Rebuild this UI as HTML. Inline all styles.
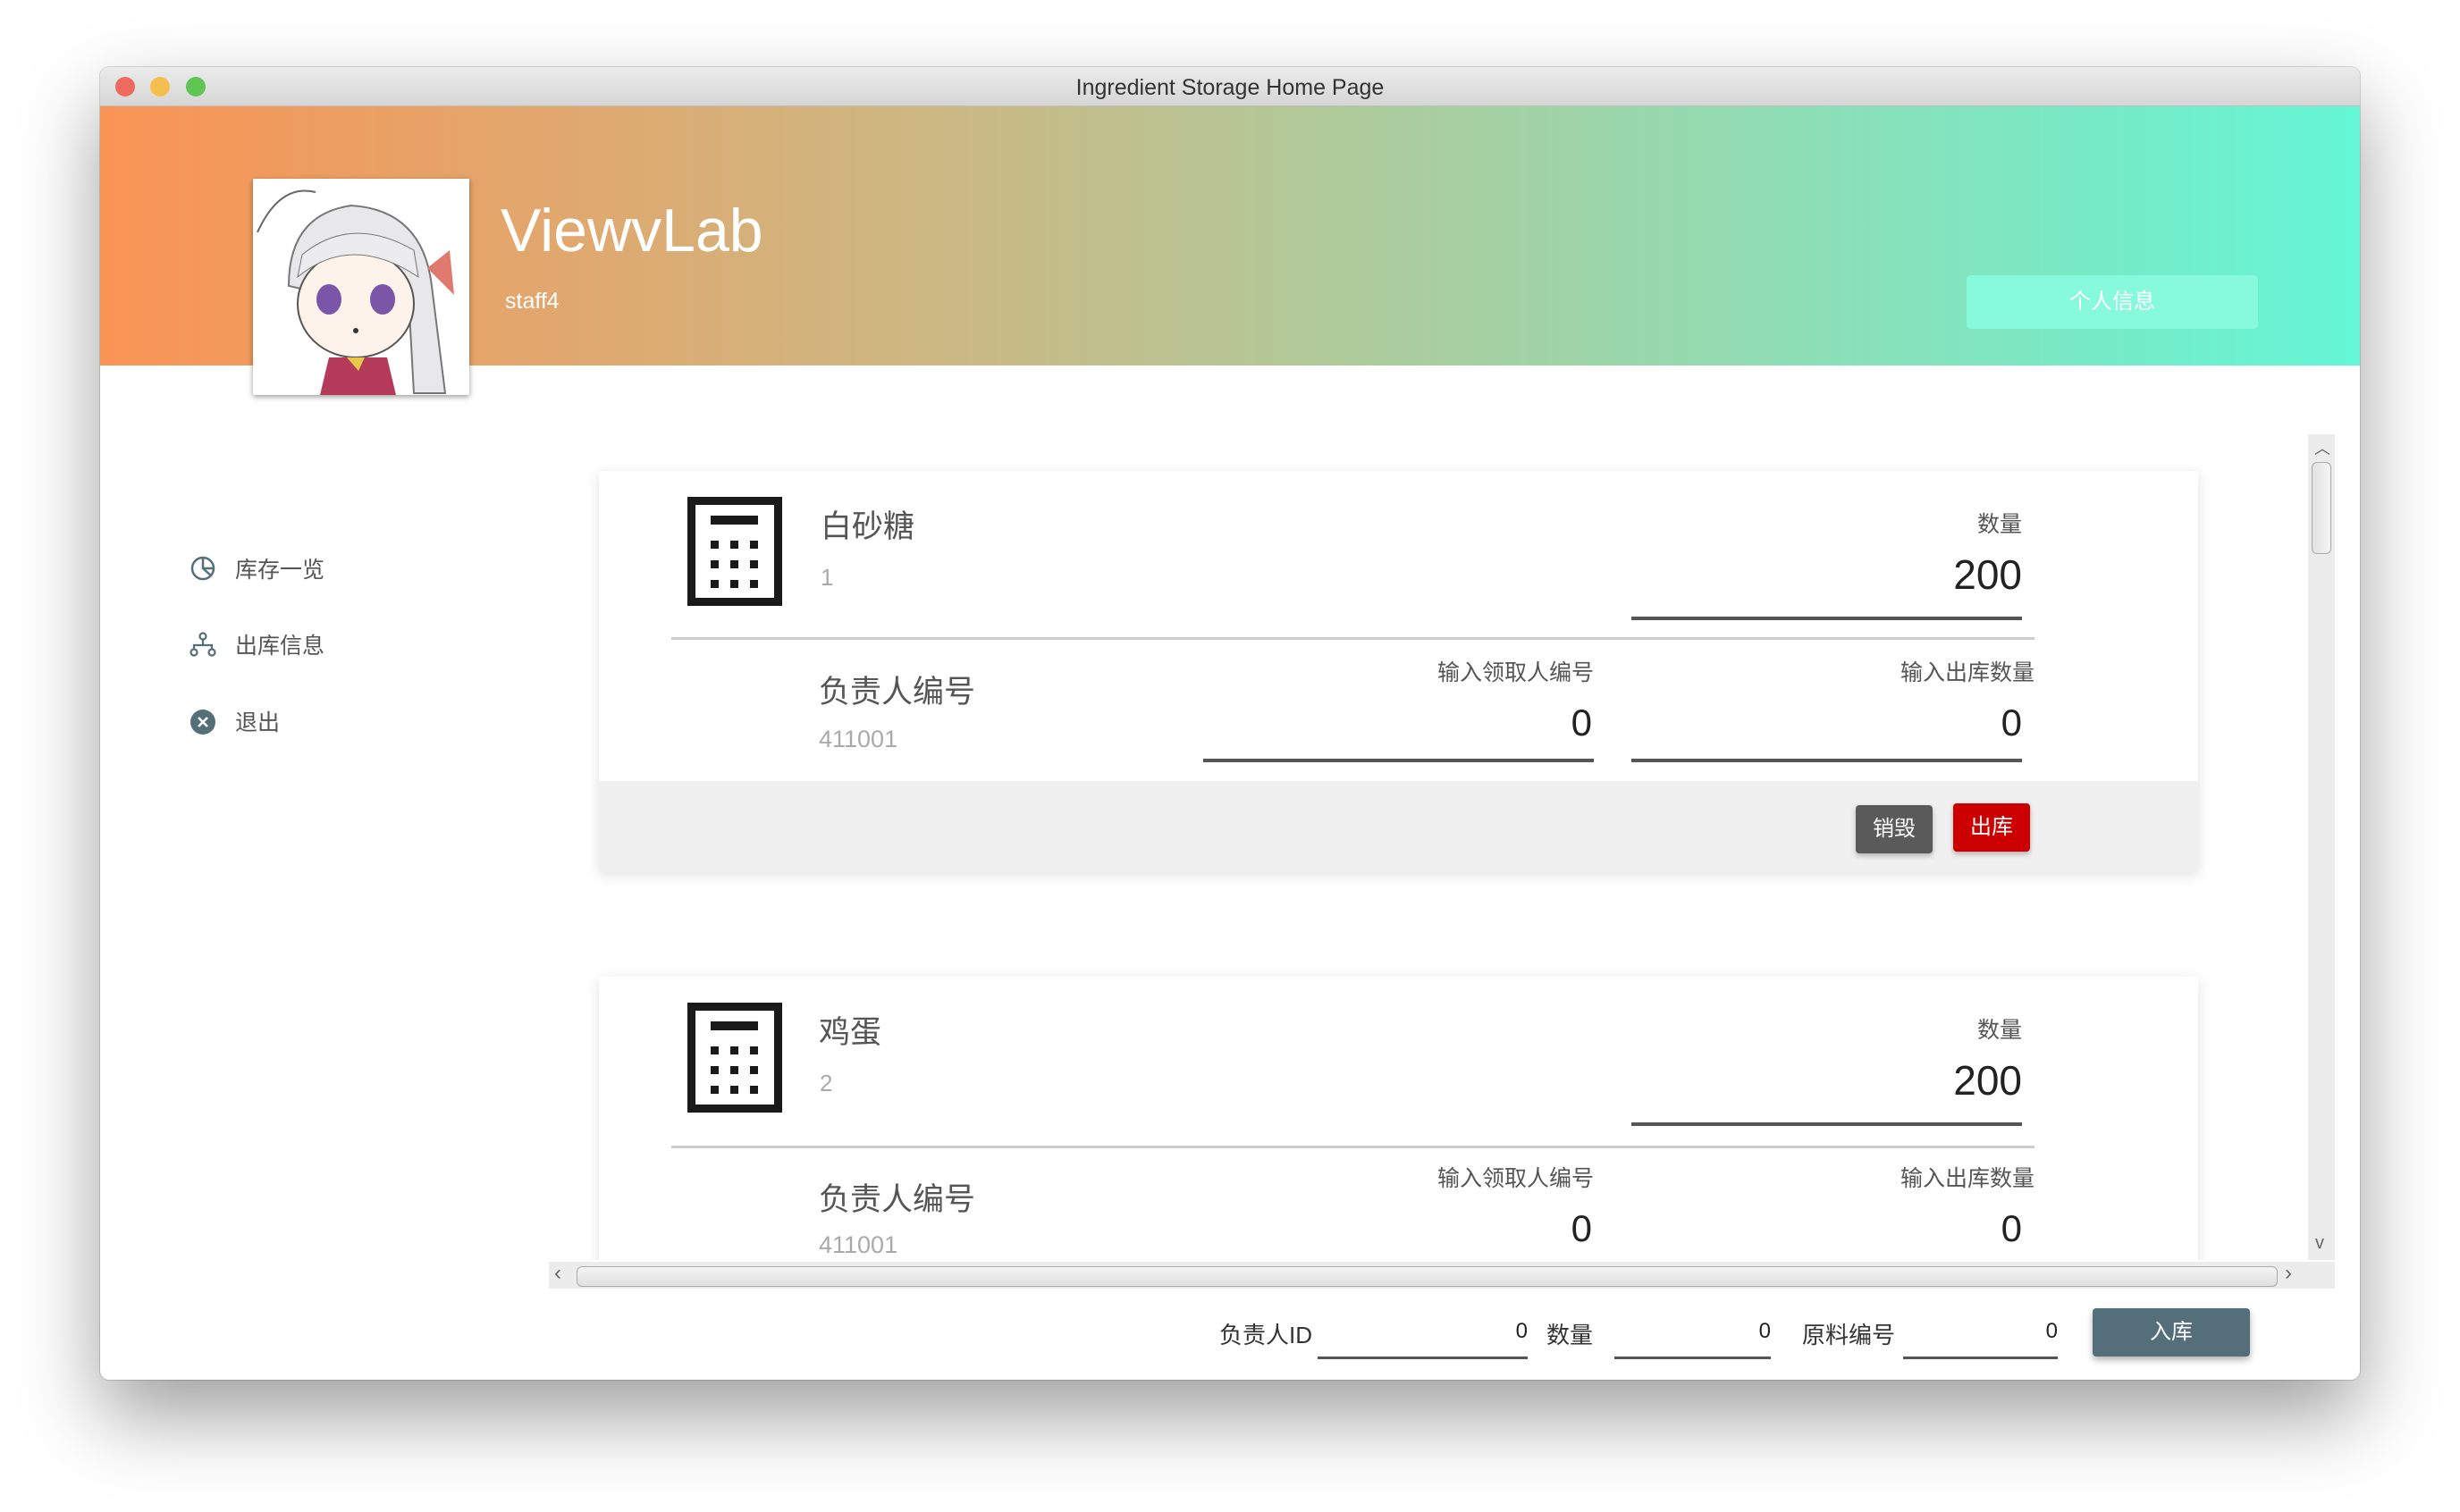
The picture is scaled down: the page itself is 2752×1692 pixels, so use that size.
<!DOCTYPE html>
<html><head><meta charset="utf-8"><style>
*{margin:0;padding:0;box-sizing:border-box}
body{width:2752px;height:1692px;background:#fff;position:relative;overflow:hidden;font-family:"Liberation Sans","Noto Sans CJK SC",sans-serif}
.a{position:absolute}
.win{left:112px;top:75px;width:2528px;height:1469px;background:#fff;border-radius:10px;box-shadow:0 40px 90px rgba(0,0,0,.38),0 0 0 1px rgba(0,0,0,.15);overflow:hidden}
.tb{left:0;top:0;width:2528px;height:44px;background:linear-gradient(#ebebeb,#d6d6d6);border-bottom:1px solid #c0c0c0}
.dot{width:22px;height:22px;border-radius:50%;top:11px}
.hdr{left:0;top:44px;width:2528px;height:290px;background:linear-gradient(90deg,#fa9455,#c8bb87 40%,#64f6d6)}
.c{color:#555}
.r{text-align:right}
.card{left:56px;width:1789px;background:#fff;box-shadow:0 3px 14px rgba(0,0,0,.12)}
.ul{height:4px;background:#555}
</style></head><body>
<div class="a win">
 <div class="a tb"></div>
 <div class="a dot" style="left:17px;background:#ee6a5f"></div>
 <div class="a dot" style="left:56px;background:#f5bf4f"></div>
 <div class="a dot" style="left:96px;background:#61c554"></div>
 <div class="a" style="left:0;top:9px;width:2528px;text-align:center;font-size:25px;color:#333">Ingredient Storage Home Page</div>
 <div class="a hdr"></div>
 <div class="a" style="left:171px;top:125px;width:242px;height:242px;background:#fff;box-shadow:0 2px 6px rgba(0,0,0,.4);overflow:hidden">
  <svg width="242" height="242" viewBox="0 0 242 242">
   <path d="M5 60 Q30 5 70 15" stroke="#666" fill="none" stroke-width="2"/>
   <path d="M40 120 Q40 40 110 30 Q190 35 200 120 L215 240 L180 240 L175 150 Z" fill="#e8e8ea" stroke="#777" stroke-width="2"/>
   <ellipse cx="115" cy="140" rx="65" ry="60" fill="#fdf3ea" stroke="#555" stroke-width="2"/>
   <path d="M50 110 Q110 60 185 110 L180 80 Q110 40 55 85 Z" fill="#ececee" stroke="#777"/>
   <ellipse cx="85" cy="135" rx="14" ry="17" fill="#7a55a8"/>
   <ellipse cx="145" cy="135" rx="14" ry="17" fill="#7a55a8"/>
   <circle cx="115" cy="170" r="3" fill="#333"/>
   <path d="M195 100 L220 80 L225 130 Z" fill="#e07a6e"/>
   <path d="M75 242 L85 200 L150 200 L160 242 Z" fill="#b53a5a"/>
   <path d="M105 200 L125 200 L118 215 Z" fill="#e8c84a"/>
  </svg>
 </div>
 <div class="a" style="left:448px;top:144px;font-size:68px;color:#fff">ViewvLab</div>
 <div class="a" style="left:453px;top:248px;font-size:25px;color:#fff">staff4</div>
 <div class="a" style="left:2088px;top:233px;width:326px;height:60px;border-radius:5px;background:#88fadc;color:#fff;font-size:24px;text-align:center;line-height:60px">个人信息</div>

 <svg class="a" style="left:100px;top:546px" width="30" height="30" viewBox="0 0 30 30"><circle cx="15" cy="15" r="12" fill="none" stroke="#546e7a" stroke-width="2.5"/><path d="M15 3 V15 L24 23 M15 15 H27" fill="none" stroke="#546e7a" stroke-width="2.5"/></svg>
 <div class="a c" style="left:151px;top:543px;font-size:25px">库存一览</div>
 <svg class="a" style="left:100px;top:631px" width="30" height="30" viewBox="0 0 30 30"><circle cx="15" cy="6" r="3.5" fill="none" stroke="#546e7a" stroke-width="2.2"/><circle cx="5" cy="24" r="3.5" fill="none" stroke="#546e7a" stroke-width="2.2"/><circle cx="25" cy="24" r="3.5" fill="none" stroke="#546e7a" stroke-width="2.2"/><path d="M15 10 V16 M5 20 V16 H25 V20" fill="none" stroke="#546e7a" stroke-width="2.2"/></svg>
 <div class="a c" style="left:151px;top:628px;font-size:25px">出库信息</div>
 <svg class="a" style="left:100px;top:718px" width="30" height="30" viewBox="0 0 30 30"><circle cx="15" cy="15" r="14" fill="#546e7a"/><path d="M10 10 L20 20 M20 10 L10 20" stroke="#fff" stroke-width="2.6"/></svg>
 <div class="a c" style="left:151px;top:714px;font-size:25px">退出</div>

 <div class="a" style="left:502px;top:411px;width:1968px;height:924px;overflow:hidden">
  <div class="a card" style="top:41px;height:449px">
   <div class="a" style="left:0;top:347px;width:1789px;height:102px;background:#f0f0f0"></div>
  </div>
  <div class="a card" style="top:607px;height:449px"></div>
 </div>
 <div class="a" style="left:2470px;top:411px;width:30px;height:924px;background:#ececec"></div>
 <div class="a" style="left:2474px;top:442px;width:22px;height:103px;border:1.5px solid #aaa;border-radius:6px;background:linear-gradient(90deg,#e2e2e2,#f5f5f5)"></div>
 <div class="a" style="left:2477px;top:413px;font-size:18px;color:#666">︿</div>
 <div class="a" style="left:2478px;top:1305px;font-size:20px;color:#666">v</div>
 <div class="a" style="left:502px;top:1337px;width:1998px;height:30px;background:#ececec"></div>
 <div class="a" style="left:533px;top:1342px;width:1903px;height:23px;border:1.5px solid #aaa;border-radius:6px;background:linear-gradient(#f5f5f5,#e0e0e0)"></div>
 <div class="a" style="left:508px;top:1336px;font-size:24px;color:#666">‹</div>
 <div class="a" style="left:2444px;top:1336px;font-size:24px;color:#666">›</div>
</div>

<div class="a" style="left:614px;top:486px;width:1968px;height:924px;overflow:hidden">
 <div class="a" style="left:-614px;top:-486px;width:2752px;height:1692px">
  <div class="a" style="left:769px;top:556px;width:106px;height:122px;border:9px solid #1a1a1a"></div>
  <div class="a" style="left:795px;top:577px;width:53px;height:10px;background:#1a1a1a"></div>
  <svg class="a" style="left:795px;top:605px" width="60" height="60"><g fill="#1a1a1a"><rect x="0" y="0" width="9" height="9"/><rect x="22" y="0" width="9" height="9"/><rect x="44" y="0" width="9" height="9"/><rect x="0" y="22" width="9" height="9"/><rect x="22" y="22" width="9" height="9"/><rect x="44" y="22" width="9" height="9"/><rect x="0" y="44" width="9" height="9"/><rect x="22" y="44" width="9" height="9"/><rect x="44" y="44" width="9" height="9"/></g></svg>
  <div class="a c" style="left:918px;top:561px;font-size:35px">白砂糖</div>
  <div class="a" style="left:918px;top:631px;font-size:26px;color:#aaa">1</div>
  <div class="a c r" style="left:2062px;top:567px;width:200px;font-size:25px">数量</div>
  <div class="a r" style="left:2062px;top:616px;width:200px;font-size:46px;color:#222">200</div>
  <div class="a ul" style="left:1825px;top:690px;width:437px"></div>
  <div class="a" style="left:751px;top:713px;width:1525px;height:3px;background:#ccc"></div>
  <div class="a c" style="left:916px;top:746px;font-size:35px">负责人编号</div>
  <div class="a" style="left:916px;top:812px;font-size:27px;color:#aaa">411001</div>
  <div class="a c r" style="left:1483px;top:733px;width:300px;font-size:25px">输入领取人编号</div>
  <div class="a r" style="left:1481px;top:785px;width:300px;font-size:42px;color:#222">0</div>
  <div class="a ul" style="left:1346px;top:849px;width:437px"></div>
  <div class="a c r" style="left:1976px;top:733px;width:300px;font-size:25px">输入出库数量</div>
  <div class="a r" style="left:1962px;top:785px;width:300px;font-size:42px;color:#222">0</div>
  <div class="a ul" style="left:1825px;top:849px;width:437px"></div>
  <div class="a" style="left:2076px;top:901px;width:86px;height:54px;background:#5a5a5a;border-radius:4px;color:#fff;font-size:24px;text-align:center;line-height:54px;box-shadow:0 3px 6px rgba(0,0,0,.25)">销毁</div>
  <div class="a" style="left:2185px;top:899px;width:86px;height:54px;background:#cc0000;border-radius:4px;color:#fff;font-size:24px;text-align:center;line-height:54px;box-shadow:0 3px 6px rgba(0,0,0,.25)">出库</div>
  <div class="a" style="left:769px;top:1122px;width:106px;height:123px;border:9px solid #1a1a1a"></div>
  <div class="a" style="left:795px;top:1143px;width:53px;height:10px;background:#1a1a1a"></div>
  <svg class="a" style="left:795px;top:1171px" width="60" height="60"><g fill="#1a1a1a"><rect x="0" y="0" width="9" height="9"/><rect x="22" y="0" width="9" height="9"/><rect x="44" y="0" width="9" height="9"/><rect x="0" y="22" width="9" height="9"/><rect x="22" y="22" width="9" height="9"/><rect x="44" y="22" width="9" height="9"/><rect x="0" y="44" width="9" height="9"/><rect x="22" y="44" width="9" height="9"/><rect x="44" y="44" width="9" height="9"/></g></svg>
  <div class="a c" style="left:916px;top:1127px;font-size:35px">鸡蛋</div>
  <div class="a" style="left:917px;top:1197px;font-size:26px;color:#aaa">2</div>
  <div class="a c r" style="left:2062px;top:1133px;width:200px;font-size:25px">数量</div>
  <div class="a r" style="left:2062px;top:1182px;width:200px;font-size:46px;color:#222">200</div>
  <div class="a ul" style="left:1825px;top:1256px;width:437px"></div>
  <div class="a" style="left:751px;top:1282px;width:1525px;height:3px;background:#ccc"></div>
  <div class="a c" style="left:916px;top:1314px;font-size:35px">负责人编号</div>
  <div class="a" style="left:916px;top:1378px;font-size:27px;color:#aaa">411001</div>
  <div class="a c r" style="left:1483px;top:1299px;width:300px;font-size:25px">输入领取人编号</div>
  <div class="a r" style="left:1481px;top:1351px;width:300px;font-size:42px;color:#222">0</div>
  <div class="a c r" style="left:1976px;top:1299px;width:300px;font-size:25px">输入出库数量</div>
  <div class="a r" style="left:1962px;top:1351px;width:300px;font-size:42px;color:#222">0</div>
 </div>
</div>

<div class="a" style="left:1364px;top:1474px;font-size:26px;color:#333">负责人ID</div>
<div class="a r" style="left:1609px;top:1476px;width:100px;font-size:24px;color:#222">0</div>
<div class="a ul" style="left:1474px;top:1518px;width:235px;height:3px"></div>
<div class="a" style="left:1730px;top:1474px;font-size:26px;color:#333">数量</div>
<div class="a r" style="left:1881px;top:1476px;width:100px;font-size:24px;color:#222">0</div>
<div class="a ul" style="left:1806px;top:1518px;width:175px;height:3px"></div>
<div class="a" style="left:2016px;top:1474px;font-size:26px;color:#333">原料编号</div>
<div class="a r" style="left:2202px;top:1476px;width:100px;font-size:24px;color:#222">0</div>
<div class="a ul" style="left:2129px;top:1518px;width:173px;height:3px"></div>
<div class="a" style="left:2341px;top:1464px;width:176px;height:54px;background:#546e7a;border-radius:4px;color:#fff;font-size:24px;text-align:center;line-height:54px;box-shadow:0 4px 8px rgba(0,0,0,.3)">入库</div>
</body></html>
